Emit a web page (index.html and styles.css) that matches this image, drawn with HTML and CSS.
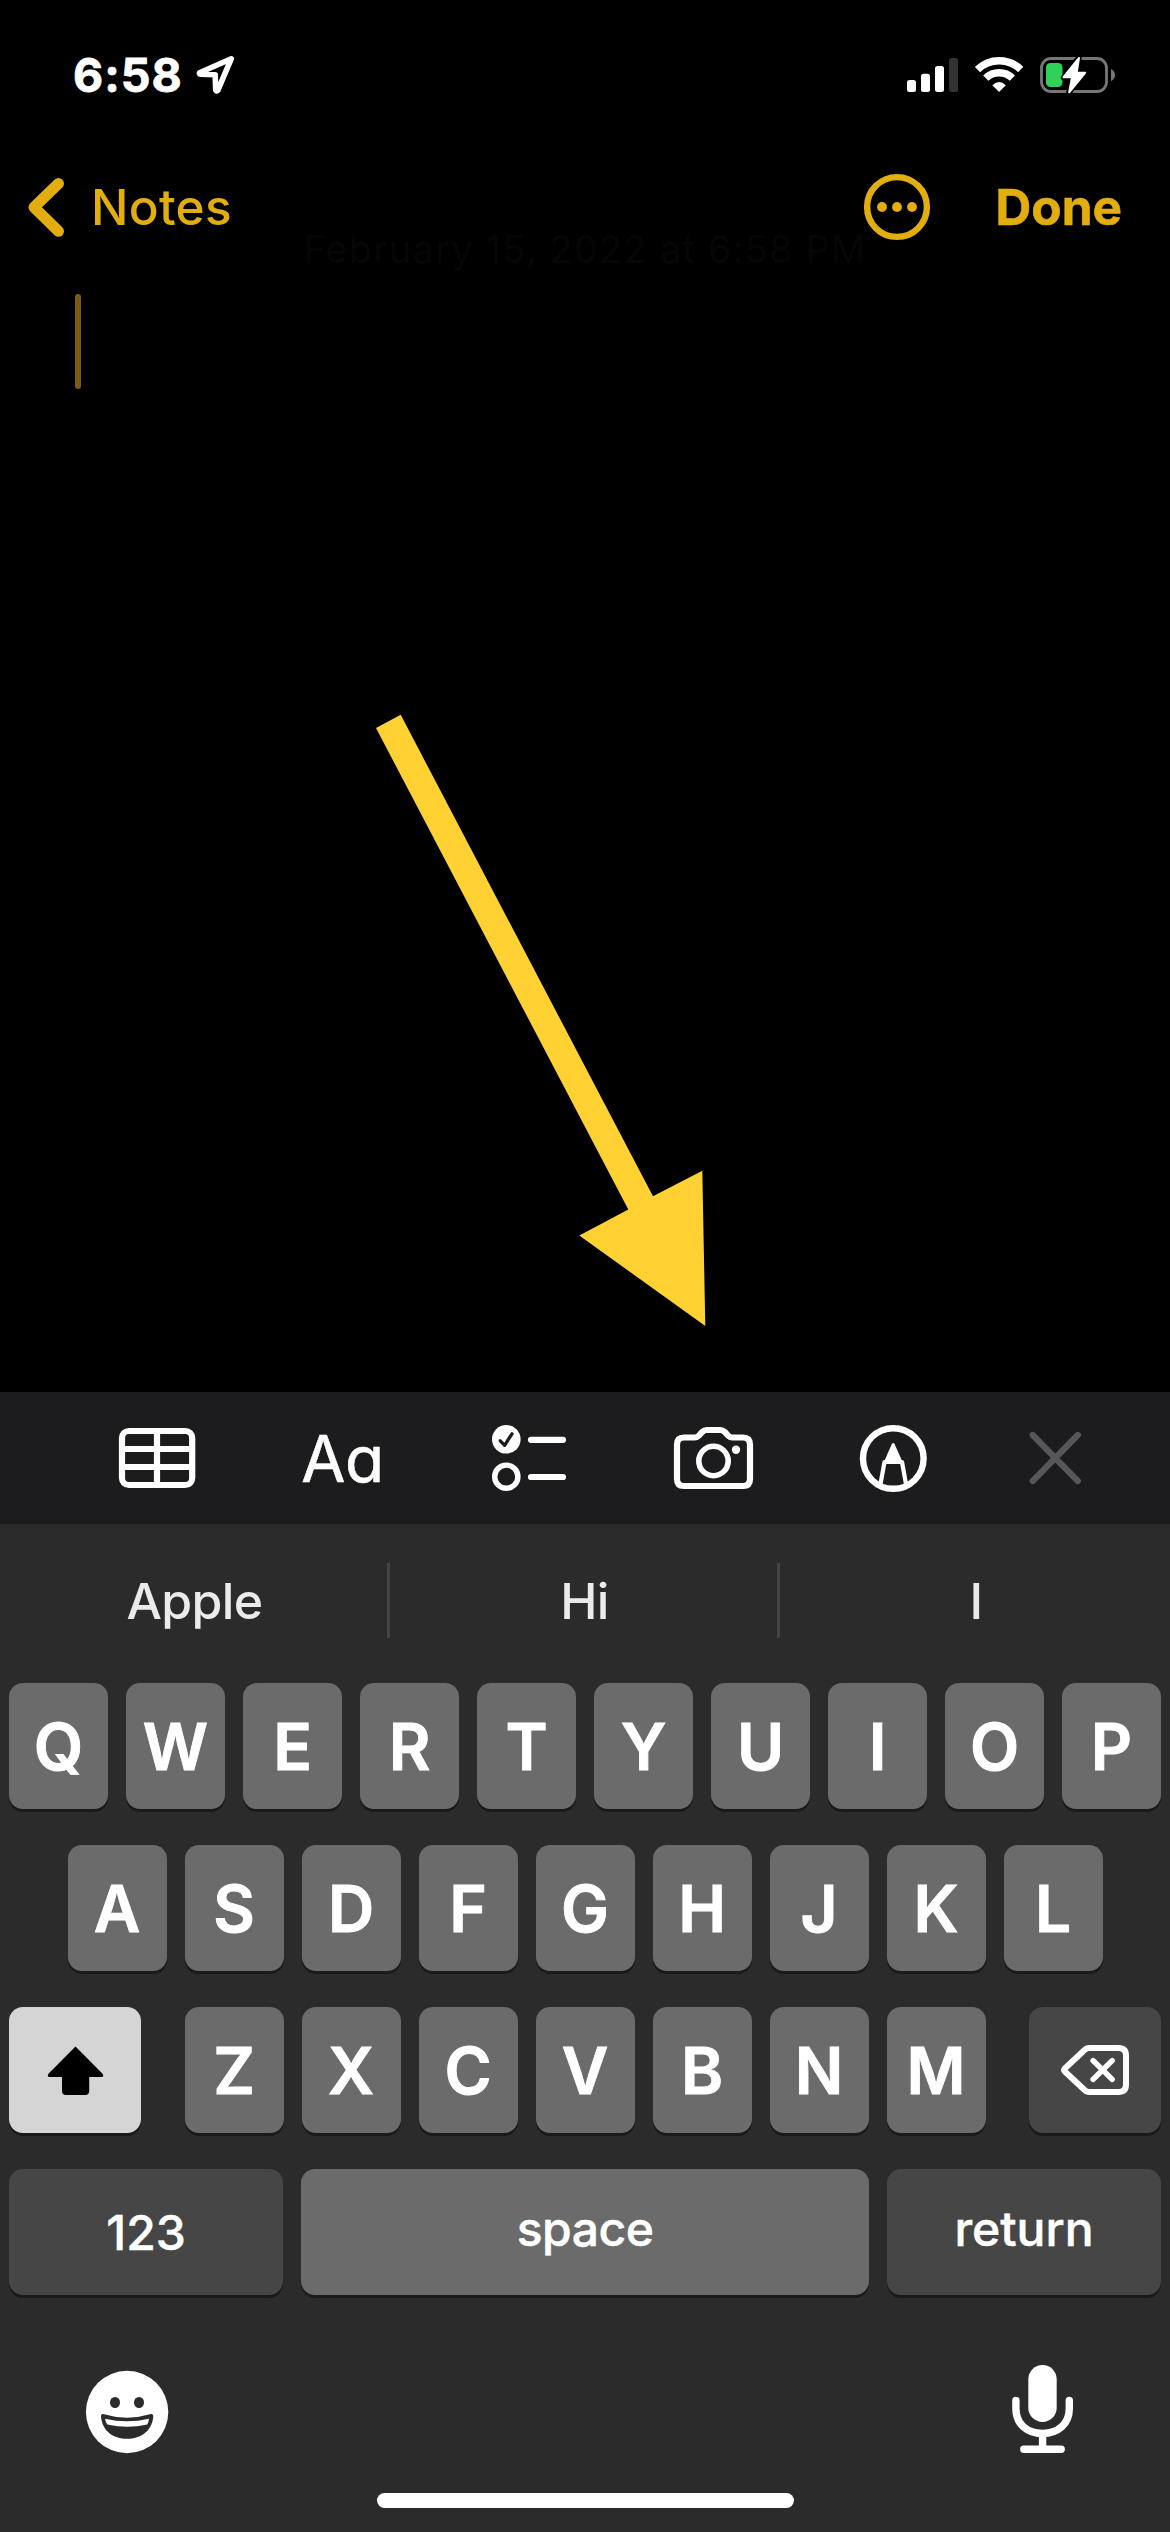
FILE: index.html
```html
<!DOCTYPE html>
<html lang="en">
<head>
<meta charset="utf-8">
<title>Notes</title>
<link rel="stylesheet" href="styles.css">
</head>
<body>
<div class="phone">
  <header class="status">
    <span class="time">6:58</span>
    <svg class="location" viewBox="196 55 40 40" width="40" height="40"><path d="M231.300 58.700 L199.500 72.700 Q199 74.200 200.500 74.300 L215.200 74.800 L215.700 90 Q216.500 91.600 217.800 90.300 Z"/></svg>
    <div class="indicators">
      <svg viewBox="907 55 51 38" width="51" height="38"><g fill="#fff"><rect x="907" y="79" width="9" height="12" rx="2.5"/><rect x="921" y="72.7" width="9" height="18.3" rx="2.5"/><rect x="935" y="65" width="9" height="26" rx="2.5"/></g><rect x="949" y="57" width="9" height="34" rx="2.5" fill="#333"/></svg>
      <svg class="wifi" viewBox="975 55 49 38" width="49" height="38"><g fill="none" stroke="#fff" stroke-width="7.4"><path d="M977.5 68.5 A31 31 0 0 1 1020.700 68.5"/><path d="M985.8 77.2 A19 19 0 0 1 1012.400 77.2"/></g><path d="M999.1 91 L992.400 84.2 Q999.1 78 1005.800 84.2 Z" fill="#fff"/></svg>
      <svg class="battery" viewBox="1040 54 76 40" width="76" height="40"><rect x="1041.500" y="57.5" width="65" height="33" rx="9.500" fill="none" stroke="#777" stroke-width="2.8"/><rect x="1046" y="62" width="16.500" height="24" rx="4.500" fill="#30d158"/><path d="M1111 68 Q1115 70 1115 74 Q1115 78 1111 80 Z" fill="#777"/><path d="M1079 56.500 L1063.500 76.700 H1071.800 L1069 91.600 L1085.500 71.500 H1077 Z" fill="#000" stroke="#000" stroke-width="5.500" stroke-linejoin="round"/><path d="M1079 57 L1063.500 76.200 H1072 L1069.200 91.300 L1085.300 71.700 H1076.700 Z" fill="#fff" stroke="#fff" stroke-width="2" stroke-linejoin="round"/></svg>
    </div>
  </header>

  <nav class="nav">
    <svg viewBox="28 177 37 61" width="37" height="61"><path class="chevron" d="M58.500 183.500 L34 207.300 L58.500 231.300"/></svg>
    <span class="back">Notes</span>
    <svg class="more" viewBox="860 173 68 68" width="68" height="68"><circle cx="894" cy="207" r="29.900" fill="none" stroke="currentColor" stroke-width="6.400"/><g fill="currentColor"><circle cx="879" cy="207" r="4.900"/><circle cx="894" cy="207" r="4.900"/><circle cx="909" cy="207" r="4.900"/></g></svg>
    <span class="done">Done</span>
  </nav>

  <main class="note">
    <time class="date">February 15, 2022 at 6:58 PM</time>
    <div class="caret"></div>
    <svg class="pointer" viewBox="376 714 330 613" width="330" height="613"><path d="M376 728 L400.700 714.800 L653 1196.300 L702.300 1170.700 L705.300 1326 L579.300 1235.500 L628.300 1209.500 Z"/></svg>
  </main>

  <div class="toolbar">
    <svg viewBox="118 1427 78 62" width="78" height="62"><rect x="122" y="1431" width="70.200" height="54" rx="7"/><path d="M157 1431 V1485 M122 1449 H192 M122 1467 H192"/></svg>
    <span class="format">Aa</span>
    <svg viewBox="491 1424 76 68" width="76" height="68"><circle cx="506.300" cy="1439.300" r="14.300" class="solid"/><path d="M500.300 1440.800 L504.600 1445.300 L512 1433.800" stroke="#1c1c1e" stroke-width="3.300"/><circle cx="506.300" cy="1476.700" r="11.600" stroke-width="5.400"/><path d="M531 1439.800 H563 M531 1477 H563"/></svg>
    <svg viewBox="673 1425 81 64" width="81" height="64"><path d="M684 1436.500 H694.500 Q697.200 1436.500 699 1434.500 L702.500 1430.700 Q704.300 1429 706.500 1429 H720.500 Q722.700 1429 724.500 1430.700 L728 1434.500 Q729.800 1436.500 732.500 1436.500 H743 Q750 1436.500 750 1443.500 V1478 Q750 1485 743 1485 H684 Q677 1485 677 1478 V1443.500 Q677 1436.500 684 1436.500 Z"/><circle cx="713.500" cy="1460" r="14.700" stroke-width="5.600"/><circle cx="736" cy="1448.700" r="4.200" class="solid"/></svg>
    <svg viewBox="860 1423 69 69" width="69" height="69"><circle cx="894.300" cy="1457.500" r="30.300" stroke-width="6.400"/><path d="M881.500 1483 L885.500 1461 H903 L907 1483" stroke-width="4.200"/><path d="M894.200 1443.500 L886.300 1461.500 H902.200 Z" fill="#fff" stroke-width="3"/></svg>
    <svg viewBox="1030 1431 53 54" width="53" height="54"><path d="M1033.700 1435 L1078.800 1481 M1078.800 1435 L1033.700 1481" stroke="#57575b"/></svg>
  </div>

  <section class="keyboard">
    <div class="suggestions"><span>Apple</span><i></i><span>Hi</span><i></i><span>I</span></div>
    <div class="row"><b>Q</b><b>W</b><b>E</b><b>R</b><b>T</b><b>Y</b><b>U</b><b>I</b><b>O</b><b>P</b></div>
    <div class="row"><b>A</b><b>S</b><b>D</b><b>F</b><b>G</b><b>H</b><b>J</b><b>K</b><b>L</b></div>
    <div class="row spread">
      <b class="wide shift"><svg viewBox="47 2045 57 50" width="57" height="50"><path d="M75.500 2046.500 L102.300 2073.500 Q104.500 2077 101.500 2077 H89.200 V2091 Q89.200 2095 85.200 2095 H66 Q62 2095 62 2091 V2077 H49.500 Q46.500 2077 48.700 2073.500 Z"/></svg></b>
      <div class="letters"><b>Z</b><b>X</b><b>C</b><b>V</b><b>B</b><b>N</b><b>M</b></div>
      <b class="wide dark"><svg class="delete" viewBox="1059 2044 70 52" width="70" height="52"><path d="M1088.500 2048 H1117.500 Q1125 2048 1125 2055.500 V2084.500 Q1125 2092 1117.500 2092 H1088.500 Q1085.500 2092 1083.300 2089.700 L1063.800 2071.500 Q1062.300 2070 1063.800 2068.500 L1083.300 2050.300 Q1085.500 2048 1088.500 2048 Z"/><path d="M1092 2060.500 L1111.300 2079.500 M1111.300 2060.500 L1092 2079.500" stroke-width="5.300"/></svg></b>
    </div>
    <div class="row spread">
      <b class="side dark num">123</b>
      <b class="space"><span>space</span></b>
      <b class="side dark return"><span>return</span></b>
    </div>
    <footer class="bottom">
      <svg viewBox="85 2370 84 84" width="84" height="84"><circle cx="127.100" cy="2412" r="41.200" fill="#fff"/><g fill="#2b2b2b"><ellipse cx="115" cy="2402.500" rx="5" ry="5.600"/><ellipse cx="139" cy="2402.500" rx="5" ry="5.600"/><path d="M103 2414 Q127 2421.300 151 2414 Q153.500 2413.500 153.300 2416.500 C152 2431 141 2438.800 127.100 2438.800 C113 2438.800 102.200 2431 101 2416.500 Q100.800 2413.500 103 2414 Z"/></g><path d="M105 2418.700 Q127 2424 149 2418.700 Q148.700 2422 147.300 2424.500 Q127 2428.900 107.300 2424.500 Q105.500 2422 105 2418.700 Z" fill="#fff"/></svg>
      <svg viewBox="1012 2364 62 90" width="62" height="90"><rect x="1028.300" y="2365" width="28.400" height="57" rx="14.200" fill="#fff"/><g fill="none" stroke="#fff" stroke-width="7.400" stroke-linecap="round"><path d="M1015.900 2400.500 V2408.500 C1015.900 2424 1027 2433.500 1042.500 2433.500 C1058 2433.500 1069.300 2424 1069.300 2408.500 V2400.500"/><path d="M1042.600 2434 V2449 M1023.800 2449.200 H1061.200"/></g></svg>
    </footer>
    <div class="home"></div>
  </section>
</div>
</body>
</html>
```
FILE: styles.css
```css
* { box-sizing: border-box; }
body { margin: 0; background: #000; font-family: Inter, "Liberation Sans", sans-serif; color: #fff; }
svg { display: block; flex: none; }

.phone { width: 1170px; height: 2532px; display: flex; flex-direction: column; background: #000; overflow: hidden; }

.status { height: 150px; padding: 0 54px 0 73px; display: flex; align-items: center; }
.time { width: 123px; font-size: 46.5px; font-weight: 700; letter-spacing: 1px; white-space: nowrap; -webkit-text-stroke: 0.8px #fff; }
.location { fill: none; stroke: #fff; stroke-width: 5.6; stroke-linejoin: round; }
.indicators { margin-left: auto; display: flex; align-items: center; }
.wifi { margin-left: 17px; }
.battery { margin-left: 16px; }

.nav { height: 114px; padding: 0 48px 0 28px; display: flex; align-items: center; color: #e2ae0f; font-size: 49.5px; }
.chevron { fill: none; stroke: currentColor; stroke-width: 11; stroke-linecap: round; stroke-linejoin: round; }
.back { margin-left: 26px; font-weight: 500; letter-spacing: 0.3px; }
.more { margin-left: auto; margin-right: 65px; }
.done { font-weight: 700; letter-spacing: 0; -webkit-text-stroke: 0.6px currentColor; }

.note { position: relative; height: 1128px; padding: 30px 75px; }
.date { position: absolute; top: -38px; left: 0; width: 1170px; text-align: center; font-size: 38px; line-height: 46px; color: #060606; letter-spacing: 1.2px; }
.caret { width: 6px; height: 95px; border-radius: 3px; background: #7a5d0c; }
.pointer { position: absolute; left: 376px; top: 450px; fill: #ffd133; }

.toolbar { height: 132px; padding-left: 64.5px; background: #1c1c1e; display: grid; grid-template-columns: 185px 186px 186px 184px 176px 148px; align-items: center; justify-items: center; }
.toolbar svg { fill: none; stroke: #fff; stroke-width: 6.2; stroke-linecap: round; stroke-linejoin: round; }
.toolbar .solid { fill: #fff; stroke: none; }
.format { font-size: 64px; font-weight: 400; letter-spacing: -0.5px; font-feature-settings: "cv11"; -webkit-text-stroke: 0.6px #fff; }

.keyboard { height: 1008px; background: #2b2b2b; display: flex; flex-direction: column; align-items: center; }
.suggestions { width: 100%; height: 159px; padding-bottom: 6px; display: grid; grid-template-columns: 387px 3px 387px 3px 390px; align-items: center; text-align: center; font-size: 50px; font-weight: 500; letter-spacing: -0.6px; color: #ebebeb; }
.suggestions span { padding-left: 2px; }
.suggestions i { height: 75px; background: #444; }
.row, .letters { display: flex; gap: 18px; }
.row { height: 126px; margin-bottom: 36px; }
.row b { width: 99px; height: 126px; flex: none; display: flex; align-items: center; justify-content: center; border-radius: 14px; background: #6b6b6b; box-shadow: 0 3px 0 #1a1a1a; font-size: 64px; font-weight: 600; -webkit-text-stroke: 0.9px #fff; }
.spread { width: 1152px; justify-content: space-between; }
.row .wide { width: 132px; }
.row .side { width: 274px; font-size: 48px; font-weight: 500; -webkit-text-stroke: 0.5px #fff; }
.row .space { width: 568px; font-size: 48px; font-weight: 500; letter-spacing: -0.5px; -webkit-text-stroke: 0.5px #fff; }
.row .dark { background: #464646; }
.row .shift { background: #d5d5d5; }
.space span, .return span { margin-top: -8px; }
.delete { fill: none; stroke: #fff; stroke-width: 6; stroke-linecap: round; stroke-linejoin: round; }

.bottom { width: 100%; height: 168px; margin-top: -6px; padding: 39px 96px 0 85px; display: flex; justify-content: space-between; }
.bottom svg:first-child { margin-top: 6px; }
.home { width: 417px; height: 15px; border-radius: 8px; background: #fff; }
```
